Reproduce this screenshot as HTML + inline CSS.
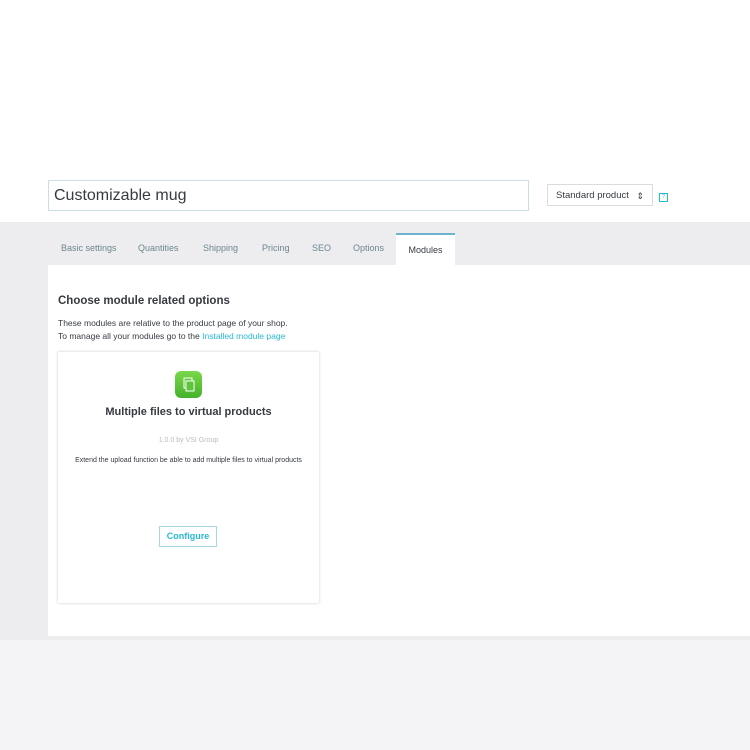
<!DOCTYPE html>
<html><head><style>
body{margin:0;width:750px;height:750px;background:#f4f4f6;font-family:"Liberation Sans",sans-serif;position:relative;overflow:hidden;color:#363a41}
.top{position:absolute;left:0;top:0;width:750px;height:222px;background:#fff}
.name{position:absolute;left:48px;top:180px;width:474px;height:29px;border:1px solid #c9dee6;font-size:16px;line-height:29px;padding-left:5px;box-sizing:content-box;color:#363a41}
.sel{position:absolute;left:547px;top:184px;width:106px;height:22px;border:1px solid #dcdcdc;font-size:9.5px;line-height:22px;padding-left:8px;box-sizing:border-box}
.sel span{position:absolute;right:8px;top:0;font-size:9px}
.q{position:absolute;left:659px;top:193px;width:7px;height:7px;border:1px solid #25b9d7;font-size:5px;color:#25b9d7;text-align:center;line-height:7px}
.band{position:absolute;left:0;top:222px;width:750px;height:418px;background:#ededf0}
.tab{position:absolute;top:243px;font-size:9px;color:#6c868e}
.active{position:absolute;left:396px;top:233px;width:59px;height:32px;background:#fff;border-top:2px solid #6bb3cf;box-sizing:border-box;font-size:9px;text-align:center;line-height:30px;color:#363a41}
.panel{position:absolute;left:48px;top:265px;width:702px;height:371px;background:#fff}
h3{position:absolute;left:58px;top:295px;margin:0;font-size:11.5px;font-weight:bold}
.p{position:absolute;left:58px;font-size:8.5px;color:#363a41}
.p a{color:#25b9d7}
.card{position:absolute;left:58px;top:352px;width:261px;height:251px;background:#fff;box-shadow:0 0 3px rgba(0,0,0,.2)}
.icon{position:absolute;left:117px;top:19px;width:27px;height:27px;border-radius:6px;background:linear-gradient(#7ad84b,#45b12a)}
.t{position:absolute;left:0;width:261px;text-align:center}
.btn{position:absolute;left:101px;top:174px;width:58px;height:21px;border:1px solid #a6d8e6;box-sizing:border-box;color:#25b9d7;font-size:9px;font-weight:bold;text-align:center;line-height:19px}
</style></head><body>
<div class="top"></div>
<div class="name">Customizable mug</div>
<div class="sel">Standard product<span>&#8661;</span></div>
<div class="q">?</div>
<div class="band"></div>
<div class="panel"></div>
<div class="tab" style="left:61px">Basic settings</div>
<div class="tab" style="left:138px">Quantities</div>
<div class="tab" style="left:203px">Shipping</div>
<div class="tab" style="left:262px">Pricing</div>
<div class="tab" style="left:312px">SEO</div>
<div class="tab" style="left:353px">Options</div>
<div class="active">Modules</div>
<h3>Choose module related options</h3>
<div class="p" style="top:318px">These modules are relative to the product page of your shop.</div>
<div class="p" style="top:331px">To manage all your modules go to the <a>Installed module page</a></div>
<div class="card">
<div class="icon"><svg width="27" height="27" viewBox="0 0 27 27"><rect x="9" y="7" width="8" height="10" fill="none" stroke="#fff" stroke-width="1"/><rect x="11" y="10" width="8" height="10" fill="#5cc43a" stroke="#fff" stroke-width="1"/></svg></div>
<div class="t" style="top:54px;font-size:11px;font-weight:bold">Multiple files to virtual products</div>
<div class="t" style="top:85px;font-size:7px;color:#bbb">1.0.0 by VSI Group</div>
<div class="t" style="top:105px;font-size:7px">Extend the upload function be able to add multiple files to virtual products</div>
<div class="btn">Configure</div>
</div>
</body></html>
